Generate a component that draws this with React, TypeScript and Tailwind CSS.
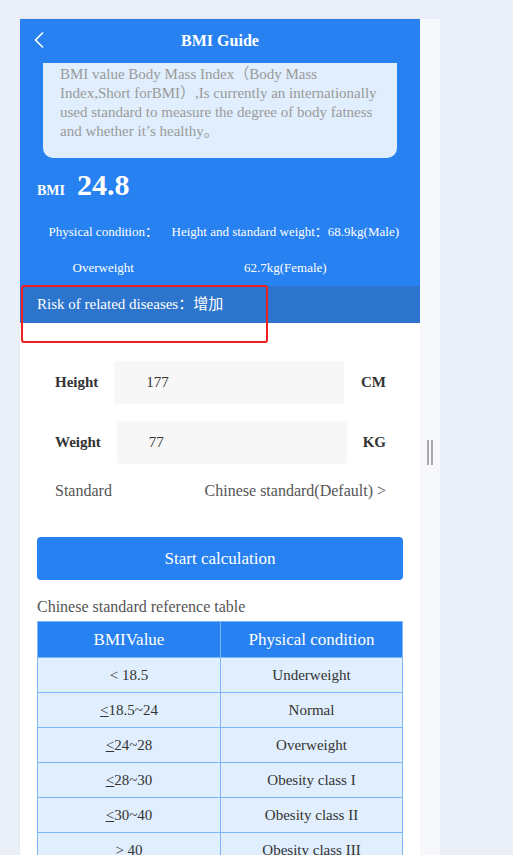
import React from "react";

const rows = [
  { value: <>&lt; 18.5</>, cond: "Underweight" },
  { value: <><span className="underline">&lt;</span>18.5~24</>, cond: "Normal" },
  { value: <><span className="underline">&lt;</span>24~28</>, cond: "Overweight" },
  { value: <><span className="underline">&lt;</span>28~30</>, cond: "Obesity class I" },
  { value: <><span className="underline">&lt;</span>30~40</>, cond: "Obesity class II" },
  { value: <>&gt; 40</>, cond: "Obesity class III" },
];

function InputRow({ label, value, unit, inputClass }: { label: string; value: string; unit: string; inputClass: string }) {
  return (
    <div className="flex items-center pl-[35px] pr-[34px]">
      <span className="text-[15px] font-bold text-[#333]">{label}</span>
      <div className={`flex h-[43px] w-[230px] items-center rounded-[4px] bg-[#f7f7f7] pl-8 text-[15px] text-[#333] ${inputClass}`}>
        {value}
      </div>
      <span className="flex-1 text-right text-[15px] font-bold text-[#333]">{unit}</span>
    </div>
  );
}

export default function App() {
  return (
    <div
      className="flex min-h-screen bg-[#ebf0f8] pt-[19px] pl-[20px]"
      style={{ fontFamily: '"Liberation Serif", "Noto Sans CJK SC", serif' }}
    >
      <div className="relative w-[400px] bg-white shadow-[0_-1px_2px_rgba(0,0,0,0.06)]">
        <div className="bg-[#2781f1] text-white">
          <div className="relative flex h-[44px] items-center justify-center">
            <svg className="absolute left-[13px] top-[12px]" width="12" height="18" viewBox="0 0 12 18" fill="none">
              <path d="M10 1.5 2.5 9l7.5 7.5" stroke="white" strokeWidth="1.6" />
            </svg>
            <span className="text-[16px] font-bold">BMI Guide</span>
          </div>
          <div className="mx-[23px] rounded-b-[10px] bg-[#e0eefd] pt-[2px] pb-[17px] pl-[17px] pr-[18px] text-[15px] leading-[19px] text-[#9a9a9a]">
            BMI value Body Mass Index（Body Mass Index,Short forBMI）,Is currently an internationally used standard to measure the degree of body fatness and whether it’s healthy。
          </div>
          <div className="flex items-baseline pl-[17px] pt-[9px]">
            <span className="text-[14px] font-bold">BMI</span>
            <span className="ml-[12px] text-[30px] font-bold leading-[36px]">24.8</span>
          </div>
          <div className="flex pl-[15px] pt-[20px] pb-[10px] text-[13px]">
            <div className="flex w-[162px] flex-col items-center gap-[19px]">
              <span className="leading-[17px]">Physical condition：</span>
              <span className="leading-[17px]">Overweight</span>
            </div>
            <div className="flex flex-1 flex-col items-center gap-[19px] whitespace-nowrap pr-[21px]">
              <span className="leading-[17px]">Height and standard weight：68.9kg(Male)</span>
              <span className="leading-[17px]">62.7kg(Female)</span>
            </div>
          </div>
        </div>
        <div className="flex h-[37px] items-center bg-[#2d74cc] pl-[17px] text-[15px] text-white">
          Risk of related diseases：增加
        </div>

        <div className="flex flex-col pt-[38px]">
          <InputRow label="Height" value="177" unit="CM" inputClass="ml-[16px]" />
          <div className="h-[17px]" />
          <InputRow label="Weight" value="77" unit="KG" inputClass="ml-[16px]" />
          <div className="mt-[15px] flex justify-between pl-[35px] pr-[34px] text-[16px] text-[#555]">
            <span>Standard</span>
            <span>Chinese standard(Default) &gt;</span>
          </div>
          <div className="mx-[17px] mt-[34px] flex h-[43px] items-center justify-center rounded-[4px] bg-[#2781f1] text-[17px] text-white">
            Start calculation
          </div>
          <div className="ml-[17px] mt-[17px] text-[16px] leading-[20px] text-[#555]">Chinese standard reference table</div>
          <table className="mx-[17px] mt-[4px] w-[366px] border-collapse text-center">
            <thead>
              <tr className="bg-[#2781f1] text-[17px] text-white">
                <th className="h-[36px] w-[183px] border border-[#7db6f8] font-normal">BMIValue</th>
                <th className="h-[36px] border border-[#7db6f8] font-normal">Physical condition</th>
              </tr>
            </thead>
            <tbody>
              {rows.map((r, i) => (
                <tr key={i} className="bg-[#e0eefd] text-[15px] text-[#333]">
                  <td className="h-[35px] border border-[#7db6f8]">{r.value}</td>
                  <td className="h-[35px] border border-[#7db6f8]">{r.cond}</td>
                </tr>
              ))}
            </tbody>
          </table>
        </div>

        <div className="pointer-events-none absolute left-[1px] top-[266px] h-[58px] w-[247px] rounded-[3px] border-2 border-[#f01e1e]" />
      </div>
      <div className="relative w-[20px] bg-[#f6f8fc]">
        <div className="absolute left-[7px] top-[421px] flex gap-[2px]">
          <div className="h-[25px] w-[2px] bg-[#aaa]" />
          <div className="h-[25px] w-[2px] bg-[#aaa]" />
        </div>
      </div>
    </div>
  );
}
